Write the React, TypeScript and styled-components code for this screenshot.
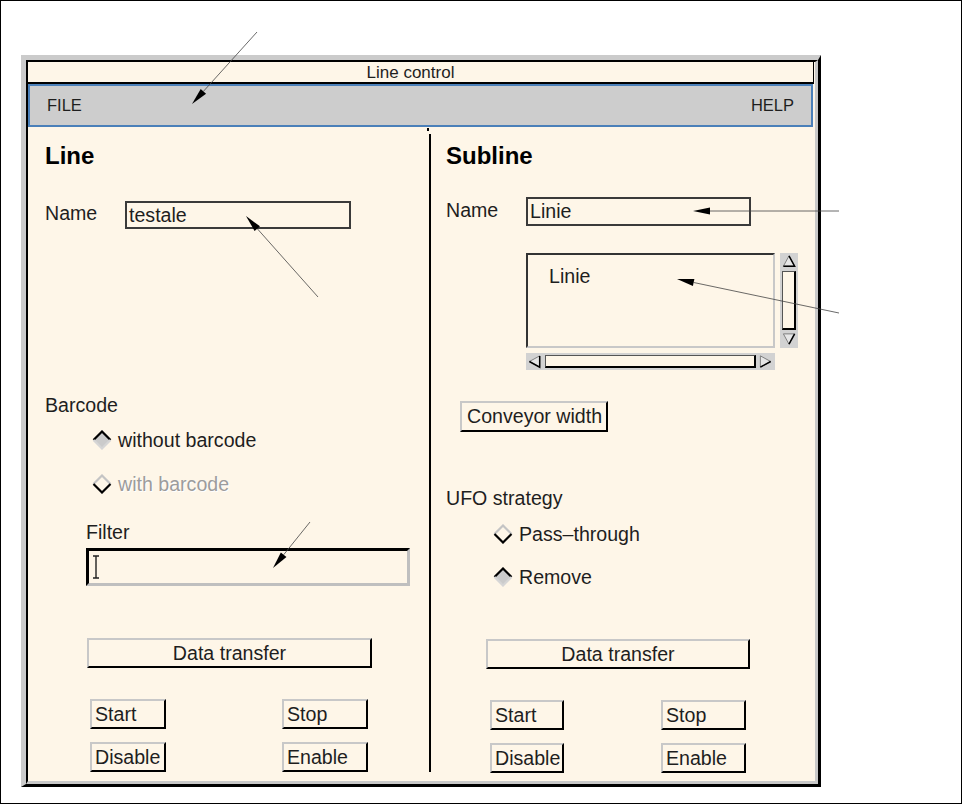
import React from "react";
import styled, { createGlobalStyle } from "styled-components";

const CREAM = "#fef6e8";
const LIGHT = "#c8c8c8";
const INK = "#1e1e1e";
const BODY_SIZE = 19.6;

const GlobalStyle = createGlobalStyle`
  html, body {
    margin: 0;
    background: #fff;
  }
  body {
    font-family: "Liberation Sans", Arial, sans-serif;
    color: ${INK};
  }
`;

const Frame = styled.div`
  position: relative;
  width: 962px;
  height: 804px;
  box-sizing: border-box;
  border: 1px solid #000;
  padding: 54px 0 0 20px;
`;

const Window = styled.div`
  width: 800px;
  height: 732px;
  box-sizing: border-box;
  border-style: solid;
  border-width: 5px 3px 3px 5px;
  border-color: #cbcbcb #000 #000 #cbcbcb;
`;

const Body = styled.div`
  height: 100%;
  box-sizing: border-box;
  border-style: solid;
  border-width: 2px 3px 3px 2px;
  border-color: #000 ${LIGHT} ${LIGHT} #000;
  background: ${CREAM};
  display: flex;
  flex-direction: column;
`;

const TitleBar = styled.div`
  height: 20px;
  margin-right: 1px;
  border-right: 1px solid #000;
  border-bottom: 2px solid #000;
  padding-right: 20px;
  font-size: 17px;
  line-height: 21px;
  text-align: center;
`;

const MenuBar = styled.div`
  height: 43px;
  box-sizing: border-box;
  margin-right: 2px;
  border: 2px solid #4b80b9;
  background: #cdcdcd;
  display: flex;
  justify-content: space-between;
  align-items: center;
  padding: 0 17px;
  font-size: 16.5px;
`;

const Content = styled.div`
  flex: 1;
  display: flex;
`;

const Panel = styled.div<{ $width?: number; $pad: number }>`
  ${(p) => (p.$width ? `width: ${p.$width}px;` : "flex: 1;")}
  box-sizing: border-box;
  padding-left: ${(p) => p.$pad}px;
  display: flex;
  flex-direction: column;
  align-items: flex-start;
`;

const Divider = styled.div`
  position: relative;
  width: 2px;
  margin: 7px 0 9px;
  background: #000;

  &::before {
    content: "";
    position: absolute;
    top: -6px;
    left: -2px;
    width: 2px;
    height: 3px;
    background: #000;
  }
`;

const Heading = styled.h2`
  margin: 15px 0 0;
  font-size: 24px;
  font-weight: bold;
  line-height: 28px;
  color: #000;
`;

const FieldRow = styled.div<{ $top: number }>`
  display: flex;
  align-items: center;
  margin-top: ${(p) => p.$top}px;
`;

const FieldLabel = styled.span`
  width: 80px;
  font-size: ${BODY_SIZE}px;
  line-height: 22px;
  margin-top: -4px;
`;

const TextBox = styled.div<{ $w: number; $h: number }>`
  width: ${(p) => p.$w}px;
  height: ${(p) => p.$h}px;
  box-sizing: border-box;
  border: 2px solid #3a3a3a;
  padding-left: 2px;
  font-size: ${BODY_SIZE}px;
  line-height: ${(p) => p.$h - 4}px;
`;

const Caption = styled.div<{ $top: number; $indent: number }>`
  margin: ${(p) => p.$top}px 0 0 ${(p) => p.$indent}px;
  font-size: ${BODY_SIZE}px;
  line-height: 22px;
`;

const RadioRow = styled.div<{ $top: number; $indent: number; $disabled?: boolean }>`
  display: flex;
  align-items: center;
  gap: 6px;
  height: 22px;
  margin: ${(p) => p.$top}px 0 0 ${(p) => p.$indent}px;
  font-size: ${BODY_SIZE}px;
  color: ${(p) => (p.$disabled ? "#9c9c9c" : INK)};
  ${(p) => (p.$disabled ? "text-shadow: 1px 1px 0 #fff;" : "")}
`;

const FilterBox = styled.div`
  width: 324px;
  height: 38px;
  box-sizing: border-box;
  margin: 5px 0 0 41px;
  border-style: solid;
  border-width: 3px;
  border-color: #000 #bfbfbf #bfbfbf #000;
  display: flex;
  align-items: center;
  padding-left: 3px;
`;

const Button = styled.button<{ $w: number; $h?: number; $center?: boolean; $top?: number; $indent?: number }>`
  width: ${(p) => p.$w}px;
  height: ${(p) => p.$h ?? 30}px;
  box-sizing: border-box;
  margin: ${(p) => p.$top ?? 0}px 0 0 ${(p) => p.$indent ?? 0}px;
  padding: 0 3px;
  border-style: solid;
  border-width: 2px;
  border-color: ${LIGHT} #000 #000 ${LIGHT};
  background: ${CREAM};
  font-family: inherit;
  font-size: ${BODY_SIZE}px;
  color: ${INK};
  text-align: ${(p) => (p.$center ? "center" : "left")};
  white-space: nowrap;
`;

const ButtonGrid = styled.div<{ $w: number; $indent: number }>`
  display: grid;
  grid-template-columns: auto auto;
  justify-content: space-between;
  row-gap: 13px;
  width: ${(p) => p.$w}px;
  margin: 31px 0 0 ${(p) => p.$indent}px;
`;

const ListArea = styled.div`
  display: grid;
  grid-template-columns: 249px 18px;
  grid-template-rows: 95px 17px;
  column-gap: 5px;
  row-gap: 5px;
  margin: 27px 0 0 80px;
`;

const ListBox = styled.div`
  box-sizing: border-box;
  border-style: solid;
  border-width: 2px;
  border-color: #333 ${LIGHT} ${LIGHT} #333;
  padding: 10px 0 0 21px;
  font-size: ${BODY_SIZE}px;
  line-height: 22px;
`;

const ScrollBar = styled.div<{ $vertical?: boolean }>`
  display: flex;
  flex-direction: ${(p) => (p.$vertical ? "column" : "row")};
  align-items: stretch;
  box-sizing: border-box;
  background: #d2d2d2;
  padding: 1px;
`;

const Thumb = styled.div<{ $vertical?: boolean }>`
  flex: 1;
  background: ${CREAM};
  border-style: solid;
  border-width: 1px 2px 2px 1px;
  border-color: #555 #000 #000 #555;
  margin: ${(p) => (p.$vertical ? "2px 1px" : "1px 2px")};
`;

const IBeam = () => (
  <svg width="8" height="24" viewBox="0 0 8 24">
    <path d="M1 1h6M4 1v22M1 23h6" stroke="#222" strokeWidth="1.4" fill="none" />
  </svg>
);

const Diamond: React.FC<{ on?: boolean }> = ({ on }) => (
  <svg width="20" height="20" viewBox="0 0 20 20">
    <polygon points="10,1.5 18.5,10 10,18.5 1.5,10" fill={on ? "#cbcbcb" : CREAM} />
    <polyline points="1.5,10 10,1.5 18.5,10" fill="none" stroke={on ? "#000" : "#c4c4c4"} strokeWidth="2.2" />
    <polyline points="1.5,10 10,18.5 18.5,10" fill="none" stroke={on ? "#d6d6d6" : "#000"} strokeWidth="2.2" />
  </svg>
);

const ArrowGlyph: React.FC<{ dir: "up" | "down" | "left" | "right" }> = ({ dir }) => {
  const pts: Record<string, string> = {
    up: "8,2 14,13 2,13",
    down: "2,2 14,2 8,13",
    left: "2,8 13,2 13,14",
    right: "13,8 2,2 2,14",
  };
  return (
    <svg width="16" height="15" viewBox="0 0 16 16" style={{ display: "block" }}>
      <polygon points={pts[dir]} fill="#e6e6e6" stroke="#7a7a7a" strokeWidth="1" />
      {dir === "up" && <polyline points="8,2 14,13 2,13" fill="none" stroke="#000" strokeWidth="1.6" />}
      {dir === "down" && <polyline points="8,13 14,2" fill="none" stroke="#000" strokeWidth="1.6" />}
      {dir === "left" && <polyline points="2,8 13,14 13,2" fill="none" stroke="#000" strokeWidth="1.6" />}
      {dir === "right" && <polyline points="2,14 13,8" fill="none" stroke="#000" strokeWidth="1.6" />}
    </svg>
  );
};

const Overlay = styled.svg`
  position: absolute;
  left: -1px;
  top: -1px;
  pointer-events: none;
`;

type Pt = [number, number];
const annotations: { from: Pt; to: Pt }[] = [
  { from: [257, 32], to: [192, 104] },
  { from: [318, 297], to: [246, 216] },
  { from: [839, 211], to: [693, 211] },
  { from: [839, 313], to: [677, 279] },
  { from: [310, 522], to: [273, 568] },
];

const Pointer: React.FC<{ from: Pt; to: Pt }> = ({ from, to }) => {
  const dx = to[0] - from[0];
  const dy = to[1] - from[1];
  const len = Math.hypot(dx, dy);
  const ux = dx / len;
  const uy = dy / len;
  const head = 17;
  const half = 3.6;
  const bx = to[0] - ux * head;
  const by = to[1] - uy * head;
  const l = `${bx - uy * half},${by + ux * half}`;
  const r = `${bx + uy * half},${by - ux * half}`;
  return (
    <g>
      <line x1={from[0]} y1={from[1]} x2={bx} y2={by} stroke="#444" strokeWidth="0.8" />
      <polygon points={`${to[0]},${to[1]} ${l} ${r}`} fill="#000" />
    </g>
  );
};

export default function App() {
  return (
    <>
      <GlobalStyle />
      <Frame>
        <Window>
          <Body>
            <TitleBar>Line control</TitleBar>
            <MenuBar>
              <span>FILE</span>
              <span>HELP</span>
            </MenuBar>
            <Content>
              <Panel $width={401} $pad={17}>
                <Heading>Line</Heading>
                <FieldRow $top={31}>
                  <FieldLabel>Name</FieldLabel>
                  <TextBox $w={226} $h={28}>testale</TextBox>
                </FieldRow>
                <Caption $top={165} $indent={0}>Barcode</Caption>
                <RadioRow $top={13} $indent={47}>
                  <Diamond on />
                  without barcode
                </RadioRow>
                <RadioRow $top={22} $indent={47} $disabled>
                  <Diamond />
                  with barcode
                </RadioRow>
                <Caption $top={26} $indent={41}>Filter</Caption>
                <FilterBox>
                  <IBeam />
                </FilterBox>
                <Button $w={285} $center $top={52} $indent={42}>Data transfer</Button>
                <ButtonGrid $w={278} $indent={45}>
                  <Button $w={76}>Start</Button>
                  <Button $w={86}>Stop</Button>
                  <Button $w={76}>Disable</Button>
                  <Button $w={86}>Enable</Button>
                </ButtonGrid>
              </Panel>
              <Divider />
              <Panel $pad={15}>
                <Heading>Subline</Heading>
                <FieldRow $top={27}>
                  <FieldLabel>Name</FieldLabel>
                  <TextBox $w={225} $h={29}>Linie</TextBox>
                </FieldRow>
                <ListArea>
                  <ListBox>Linie</ListBox>
                  <ScrollBar $vertical>
                    <ArrowGlyph dir="up" />
                    <Thumb $vertical />
                    <ArrowGlyph dir="down" />
                  </ScrollBar>
                  <ScrollBar>
                    <ArrowGlyph dir="left" />
                    <Thumb />
                    <ArrowGlyph dir="right" />
                  </ScrollBar>
                </ListArea>
                <Button $w={148} $h={31} $top={31} $indent={14} style={{ paddingLeft: 5 }}>
                  Conveyor width
                </Button>
                <Caption $top={55} $indent={0}>UFO strategy</Caption>
                <RadioRow $top={14} $indent={47}>
                  <Diamond />
                  Pass–through
                </RadioRow>
                <RadioRow $top={21} $indent={47}>
                  <Diamond on />
                  Remove
                </RadioRow>
                <Button $w={264} $center $top={51} $indent={40}>Data transfer</Button>
                <ButtonGrid $w={256} $indent={44}>
                  <Button $w={74}>Start</Button>
                  <Button $w={85}>Stop</Button>
                  <Button $w={74}>Disable</Button>
                  <Button $w={85}>Enable</Button>
                </ButtonGrid>
              </Panel>
            </Content>
          </Body>
        </Window>
        <Overlay width={962} height={804} viewBox="0 0 962 804">
          {annotations.map((a, i) => (
            <Pointer key={i} from={a.from} to={a.to} />
          ))}
        </Overlay>
      </Frame>
    </>
  );
}
